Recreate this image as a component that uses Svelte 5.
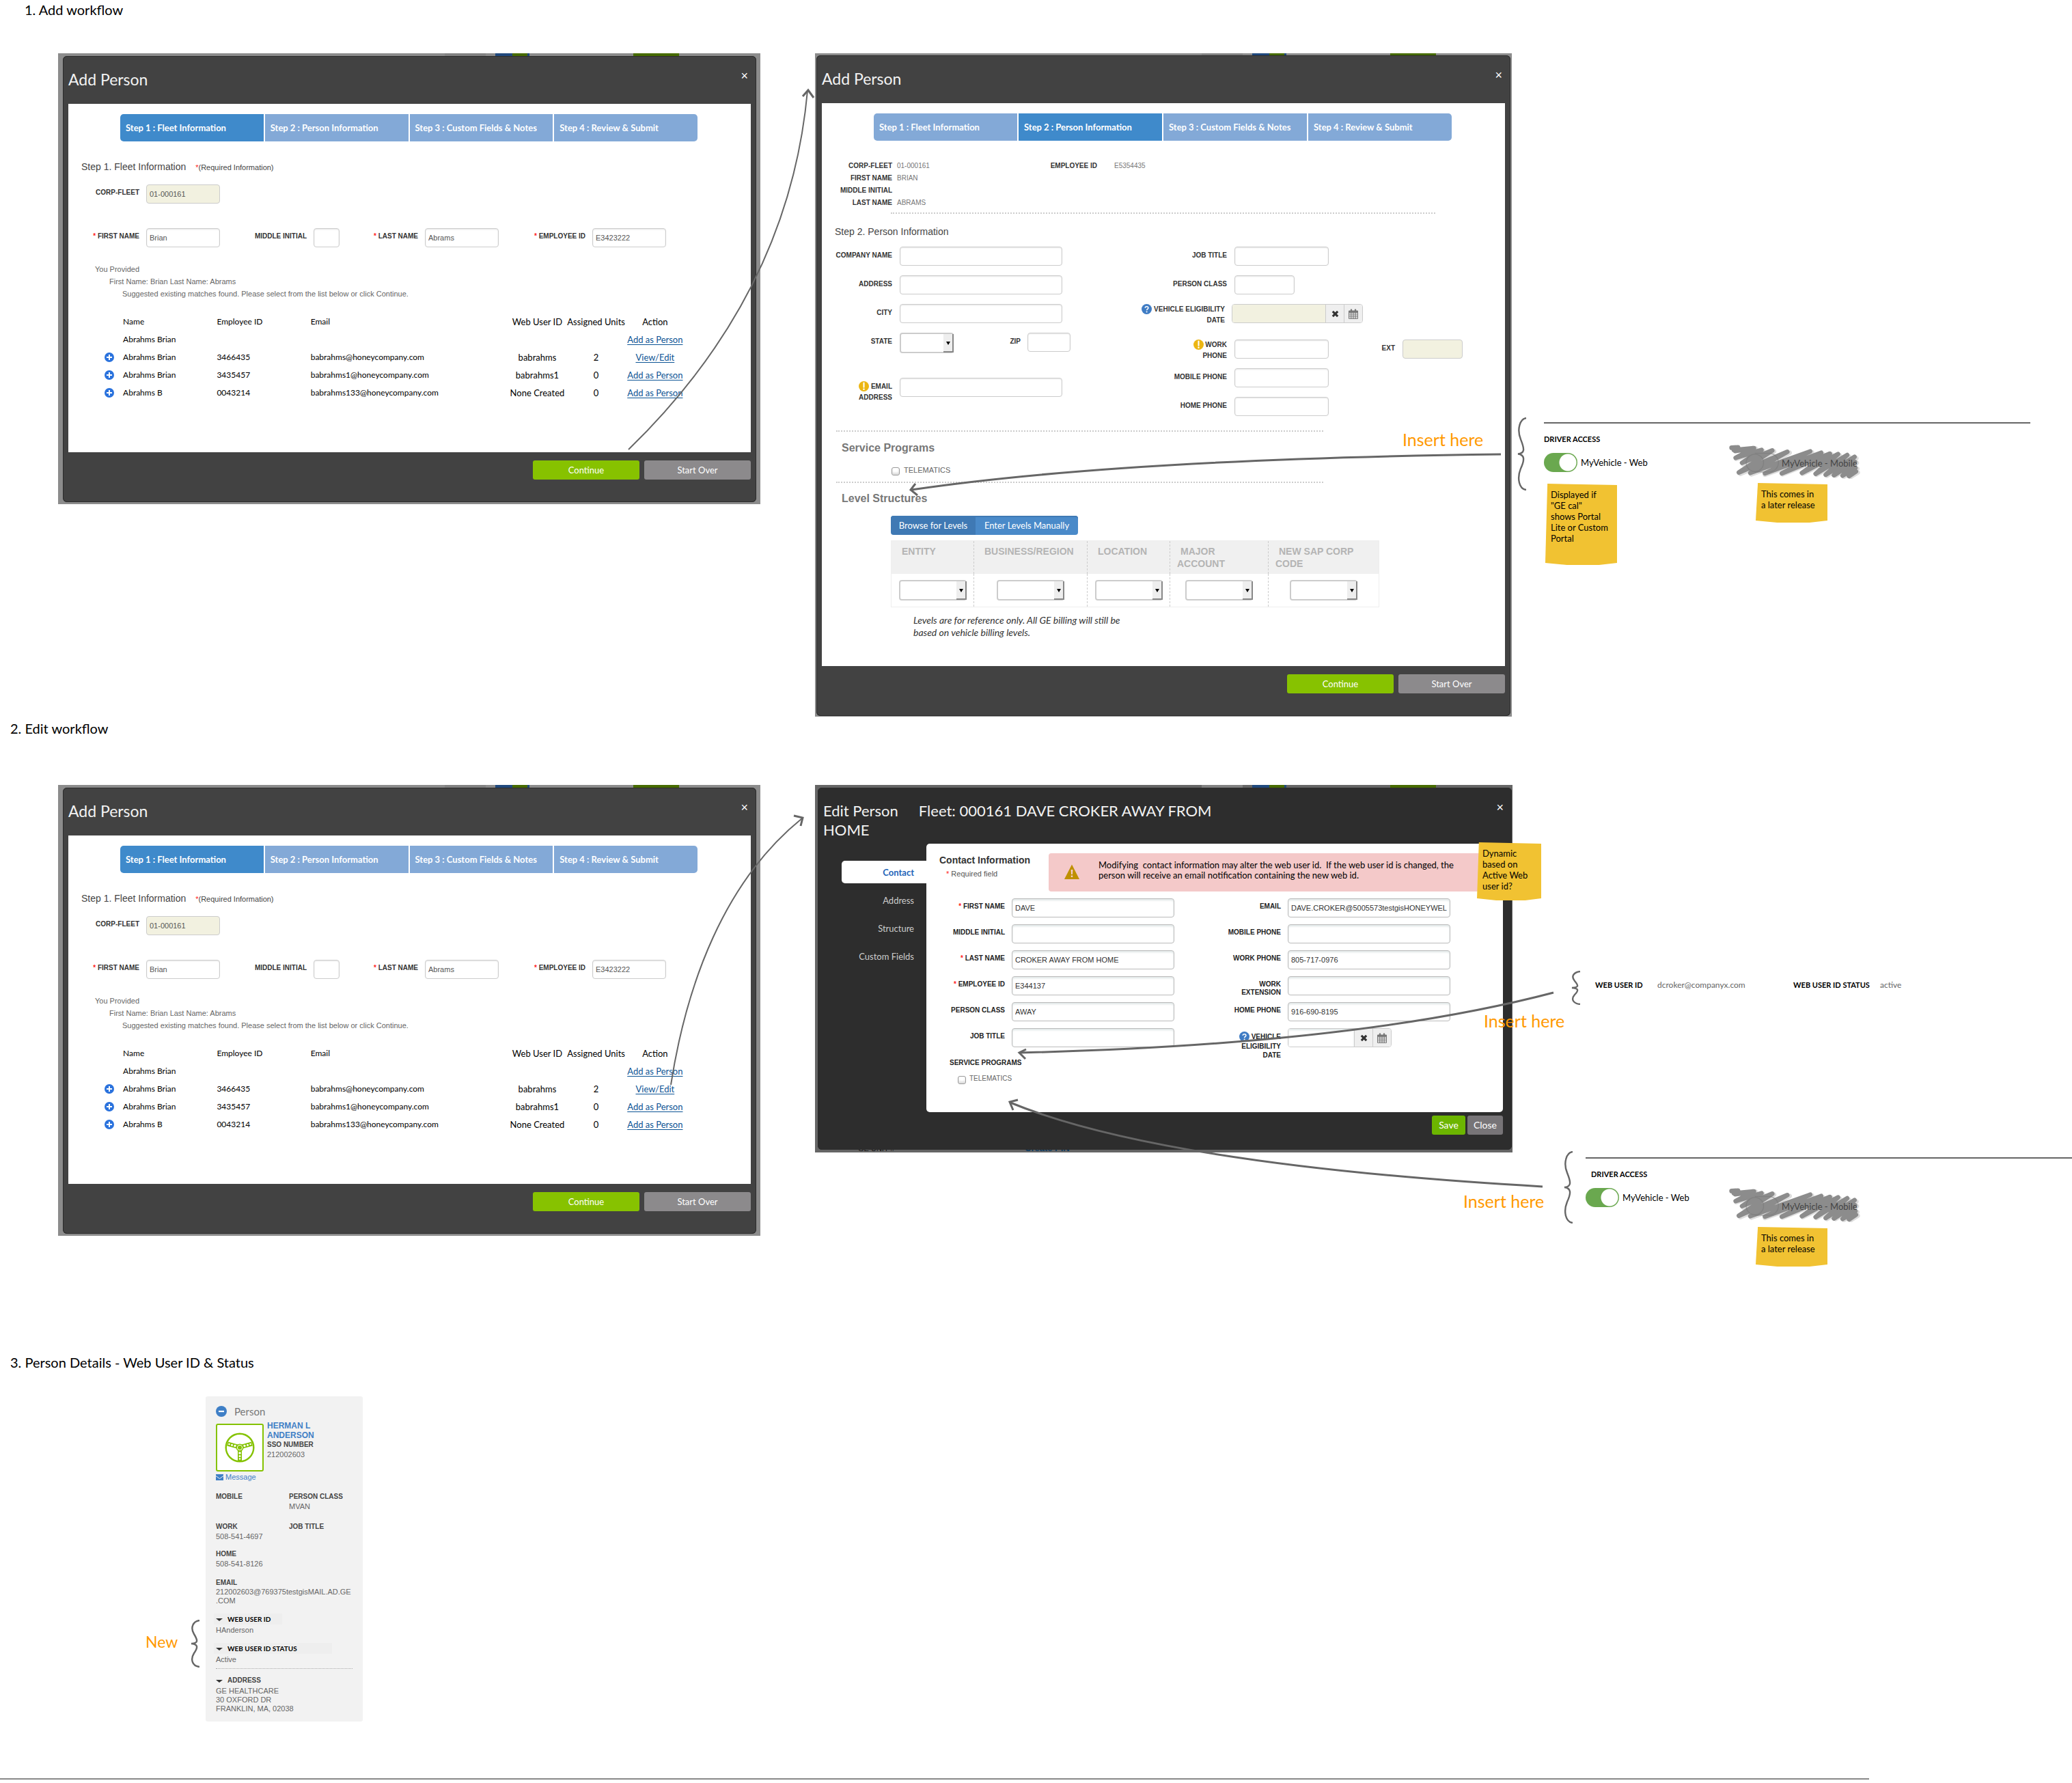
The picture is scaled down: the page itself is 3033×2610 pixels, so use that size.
<script>
  const steps = [
    'Step 1 : Fleet Information',
    'Step 2 : Person Information',
    'Step 3 : Custom Fields & Notes',
    'Step 4 : Review & Submit'
  ];

  const matches = [
    { name: 'Abrahms Brian', id: '', email: '', user: '', units: '', action: 'Add as Person' },
    { name: 'Abrahms Brian', id: '3466435', email: 'babrahms@honeycompany.com', user: 'babrahms', units: '2', action: 'View/Edit' },
    { name: 'Abrahms Brian', id: '3435457', email: 'babrahms1@honeycompany.com', user: 'babrahms1', units: '0', action: 'Add as Person' },
    { name: 'Abrahms B', id: '0043214', email: 'babrahms133@honeycompany.com', user: 'None Created', units: '0', action: 'Add as Person' }
  ];

  const levels = ['ENTITY', 'BUSINESS/REGION', 'LOCATION', 'MAJOR ACCOUNT', 'NEW SAP CORP CODE'];
</script>

{#snippet stepBar(active)}
  <ol class="steps">
    {#each steps as step, i}
      <li class:active={i === active}>{step}</li>
    {/each}
  </ol>
{/snippet}

{#snippet helpIcon()}
  <svg class="badge" viewBox="0 0 16 16" aria-hidden="true">
    <circle cx="8" cy="8" r="8" fill="#3f7cc4" />
    <path d="M5.6 6.2c0-3 4.9-3 4.9 0 0 1.7-2.4 1.8-2.4 3.6" fill="none" stroke="#fff" stroke-width="1.7" />
    <circle cx="8.1" cy="12.2" r="1.1" fill="#fff" />
  </svg>
{/snippet}

{#snippet warnIcon()}
  <svg class="badge" viewBox="0 0 16 16" aria-hidden="true">
    <circle cx="8" cy="8" r="8" fill="#ecb613" />
    <path d="M8 2.6v6.8" stroke="#fff" stroke-width="2.2" stroke-linecap="round" />
    <circle cx="8" cy="12.6" r="1.3" fill="#fff" />
  </svg>
{/snippet}

{#snippet dateButtons()}
  <button type="button" aria-label="Clear date">
    <svg viewBox="0 0 12 12" width="11" height="11"><path d="M2 2l8 8M10 2l-8 8" stroke="#333" stroke-width="3.4" /></svg>
  </button>
  <button type="button" aria-label="Pick date">
    <svg viewBox="0 0 14 15" width="14" height="15" fill="none" stroke="#777">
      <path d="M.5 3h13v11.5H.5zM.5 6h13M.5 9h13M.5 11.8h13M3.8 5v9.5M7 5v9.5M10.2 5v9.5" />
      <path d="M.5 4.2h13" stroke-width="2.4" />
      <path d="M4 .5v3M10 .5v3" stroke-width="2.2" />
    </svg>
  </button>
{/snippet}

{#snippet brace(cls, h)}
  <svg class="brace {cls}" viewBox="0 0 14 {h}" preserveAspectRatio="none" aria-hidden="true">
    <path d="M13 1C4 2 -1 {h * 0.16} 5 {h * 0.3}C11 {h * 0.44} 11 {h * 0.49} 1 {h * 0.5}C11 {h * 0.51} 11 {h * 0.58} 5 {h * 0.7}C-1 {h * 0.84} 3 {h - 2} 13 {h - 1}" />
  </svg>
{/snippet}

{#snippet fleetDialog(key)}
  <div class="dialog">
    <header class="bar">
      <h2>Add Person</h2>
      <button type="button" class="close" aria-label="Close">×</button>
    </header>
    <div class="sheet">
      {@render stepBar(0)}
      <p class="steptitle">Step 1. Fleet Information <small><i>*</i>(Required Information)</small></p>
      <div class="idgrid">
        <label for="corp-{key}">CORP-FLEET</label>
        <input id="corp-{key}" class="locked" value="01-000161" readonly />
      </div>
      <div class="idgrid names">
        <label for="first-{key}"><i>*</i> FIRST NAME</label>
        <input id="first-{key}" value="Brian" />
        <label for="mi-{key}">MIDDLE INITIAL</label>
        <input id="mi-{key}" value="" />
        <label for="last-{key}"><i>*</i> LAST NAME</label>
        <input id="last-{key}" value="Abrams" />
        <label for="emp-{key}"><i>*</i> EMPLOYEE ID</label>
        <input id="emp-{key}" value="E3423222" />
      </div>
      <div class="provided">
        <p>You Provided</p>
        <p class="in1">First Name: Brian Last Name: Abrams</p>
        <p class="in2">Suggested existing matches found. Please select from the list below or click Continue.</p>
      </div>
      <table class="matches">
        <thead>
          <tr>
            <th class="c-icon"></th>
            <th class="c-name">Name</th>
            <th class="c-name">Employee ID</th>
            <th class="c-mail">Email</th>
            <th class="c-mid">Web User ID</th>
            <th class="c-mid">Assigned Units</th>
            <th class="c-mid">Action</th>
          </tr>
        </thead>
        <tbody>
          {#each matches as m}
            <tr>
              <td>
                {#if m.id}
                  <button type="button" class="plus" aria-label="Expand {m.name}">
                    <svg viewBox="0 0 14 14" width="14" height="14"><circle cx="7" cy="7" r="7" fill="#2a72dd" /><path d="M7 3v8M3 7h8" stroke="#fff" stroke-width="2" /></svg>
                  </button>
                {/if}
              </td>
              <td>{m.name}</td>
              <td>{m.id}</td>
              <td>{m.email}</td>
              <td class="mid">{m.user}</td>
              <td class="mid">{m.units}</td>
              <td class="mid"><a href="#person">{m.action}</a></td>
            </tr>
          {/each}
        </tbody>
      </table>
    </div>
    <footer class="actions">
      <button type="button" class="go">Continue</button>
      <button type="button" class="reset">Start Over</button>
    </footer>
  </div>
{/snippet}

{#snippet driverAccess(key)}
  <h3>DRIVER ACCESS</h3>
  <label class="toggle" for="web-{key}">
    <input id="web-{key}" type="checkbox" role="switch" checked />
    <span>MyVehicle - Web</span>
  </label>
{/snippet}

{#snippet scribbled()}
  <span class="mobile">MyVehicle - Mobile</span>
  <svg class="scribble" viewBox="960 150 580 152" aria-hidden="true">
    <g fill="none" stroke-linejoin="round" stroke-linecap="round" stroke-width="20">
      <path class="shade" d="M1080 170L994 214L1112 180L1025 238L1160 182L1012 280L1228 188L1060 282L1326 186L1120 284L1374 194L1198 282L1412 196L1286 280L1448 200L1346 284L1488 204L1392 288L1520 212L1430 288L1522 232L1466 292L1524 258L1494 294L1526 274" />
      <path class="ink" d="M974 166L1002 164L984 176L1070 168L990 180L1072 168L992 210L1105 176L1020 232L1152 178L1006 274L1218 184L1056 276L1318 182L1120 278L1366 188L1194 278L1404 192L1282 276L1440 194L1342 280L1480 198L1386 284L1512 206L1422 286L1514 228L1460 288L1516 254L1488 290L1518 270" />
    </g>
    <g fill="none" stroke="#777" stroke-width="4" opacity=".5"><circle cx="1076" cy="232" r="38" /><path d="M1076 190h62a40 40 0 010 82h-62" /></g>
  </svg>
{/snippet}

<main class="board">
  <h1 class="title t1">1. Add workflow</h1>
  <h1 class="title t2">2. Edit workflow</h1>
  <h1 class="title t3">3. Person Details - Web User ID &amp; Status</h1>

  <section class="frame f1">{@render fleetDialog('a')}</section>
  <section class="frame f3">{@render fleetDialog('b')}</section>

  <section class="frame f2">
    <div class="dialog">
      <header class="bar">
        <h2>Add Person</h2>
        <button type="button" class="close" aria-label="Close">×</button>
      </header>
      <div class="sheet">
        {@render stepBar(1)}
        <dl class="summary">
          <dt>CORP-FLEET</dt><dd>01-000161</dd><dt>EMPLOYEE ID</dt><dd class="far">E5354435</dd>
          <dt>FIRST NAME</dt><dd class="wide">BRIAN</dd>
          <dt>MIDDLE INITIAL</dt><dd class="wide"></dd>
          <dt>LAST NAME</dt><dd class="wide">ABRAMS</dd>
        </dl>
        <hr class="dots upper" />
        <p class="steptitle second">Step 2. Person Information</p>
        <div class="person">
          <div class="col">
            <label class="field"><span>COMPANY NAME</span><input class="w-long" /></label>
            <label class="field"><span>ADDRESS</span><input class="w-long" /></label>
            <label class="field"><span>CITY</span><input class="w-long" /></label>
            <div class="pair">
              <label class="field"><span>STATE</span><span class="pick short"><select><option></option></select></span></label>
              <label class="field zip"><span>ZIP</span><input /></label>
            </div>
            <label class="field two mail"><span>{@render warnIcon()} EMAIL<br />ADDRESS</span><input class="w-long" /></label>
          </div>
          <div class="col right">
            <label class="field"><span>JOB TITLE</span><input class="w-mid" /></label>
            <label class="field"><span>PERSON CLASS</span><input class="w-ext" /></label>
            <div class="field two date">
              <label for="elig-a">{@render helpIcon()} VEHICLE ELIGIBILITY<br />DATE</label>
              <div class="group"><input id="elig-a" class="locked" readonly />{@render dateButtons()}</div>
            </div>
            <div class="pair phone">
              <label class="field two"><span>{@render warnIcon()} WORK<br />PHONE</span><input class="w-mid" /></label>
              <label class="field ext"><span>EXT</span><input class="w-ext locked" readonly /></label>
            </div>
            <label class="field"><span>MOBILE PHONE</span><input class="w-mid" /></label>
            <label class="field"><span>HOME PHONE</span><input class="w-mid" /></label>
          </div>
        </div>
        <hr class="dots mid1" />
        <h3 class="group-title">Service Programs</h3>
        <label class="check"><input type="checkbox" /> TELEMATICS</label>
        <hr class="dots mid2" />
        <h3 class="group-title">Level Structures</h3>
        <div class="tabs">
          <button type="button" class="on">Browse for Levels</button><button type="button">Enter Levels Manually</button>
        </div>
        <table class="levels">
          <thead>
            <tr>{#each levels as level}<th>{level}</th>{/each}</tr>
          </thead>
          <tbody>
            <tr>
              {#each levels as level}
                <td><span class="pick"><select aria-label={level}><option></option></select></span></td>
              {/each}
            </tr>
          </tbody>
        </table>
        <p class="hint">Levels are for reference only. All GE billing will still be<br />based on vehicle billing levels.</p>
      </div>
      <footer class="actions">
        <button type="button" class="go">Continue</button>
        <button type="button" class="reset">Start Over</button>
      </footer>
    </div>
  </section>

  <section class="frame f4">
    <div class="dialog dark">
      <header class="bar">
        <h2><span class="lead">Edit Person</span>Fleet: 000161 DAVE CROKER AWAY FROM<br />HOME</h2>
        <button type="button" class="close" aria-label="Close">×</button>
      </header>
      <div class="split">
        <nav>
          <a class="on" href="#contact">Contact</a>
          <a href="#address">Address</a>
          <a href="#structure">Structure</a>
          <a href="#custom">Custom Fields</a>
        </nav>
        <div class="panel">
          <div class="top">
            <div class="heading">
              <h3>Contact Information</h3>
              <p><i>*</i> Required field</p>
            </div>
            <div class="alert" role="alert">
              <svg viewBox="0 0 22 22" width="22" height="22" aria-hidden="true">
                <path d="M11 .5L22 22H0z" fill="#bf9000" /><path d="M9.6 8h2.8l-.5 7h-1.8zM9.8 16.6h2.4v2.4H9.8z" fill="#f4cccc" />
              </svg>
              <p>Modifying&nbsp; contact information may alter the web user id.&nbsp; If the web user id is changed, the<br />person will receive an email notification containing the new web id.</p>
            </div>
          </div>
          <div class="contact">
            <label for="e1"><i>*</i> FIRST NAME</label><input id="e1" value="DAVE" />
            <label for="e2">EMAIL</label><input id="e2" value="DAVE.CROKER@5005573testgisHONEYWELL" />
            <label for="e3">MIDDLE INITIAL</label><input id="e3" value="" />
            <label for="e4">MOBILE PHONE</label><input id="e4" value="" />
            <label for="e5"><i>*</i> LAST NAME</label><input id="e5" value="CROKER AWAY FROM HOME" />
            <label for="e6">WORK PHONE</label><input id="e6" value="805-717-0976" />
            <label for="e7"><i>*</i> EMPLOYEE ID</label><input id="e7" value="E344137" />
            <label for="e8">WORK<br />EXTENSION</label><input id="e8" value="" />
            <label for="e9">PERSON CLASS</label><input id="e9" value="AWAY" />
            <label for="e10">HOME PHONE</label><input id="e10" value="916-690-8195" />
            <label for="e11">JOB TITLE</label><input id="e11" value="" />
            <label for="e12" class="tall">{@render helpIcon()} VEHICLE<br />ELIGIBILITY<br />DATE</label>
            <div class="group narrow"><input id="e12" value="" />{@render dateButtons()}</div>
          </div>
          <h4>SERVICE PROGRAMS</h4>
          <label class="check inner"><input type="checkbox" /> TELEMATICS</label>
        </div>
      </div>
      <footer class="actions small">
        <button type="button" class="save">Save</button>
        <button type="button" class="shut">Close</button>
      </footer>
    </div>
    <div class="behind"><b>GE UNIT #</b><b class="pin">Create PIN</b></div>
  </section>

  <section class="access a1">
    {@render driverAccess('a')}
    <p class="note n1">Displayed if<br />"GE cal"<br />shows Portal<br />Lite or Custom<br />Portal</p>
  </section>
  <div class="later l1">{@render scribbled()}</div>
  <p class="note n2">This comes in<br />a later release</p>

  <section class="access a2">{@render driverAccess('b')}</section>
  <div class="later l2">{@render scribbled()}</div>
  <p class="note n3">This comes in<br />a later release</p>
  <p class="note n4">Dynamic<br />based on<br />Active Web<br />user id?</p>

  <dl class="webid">
    <dt>WEB USER ID</dt><dd class="w1">dcroker@companyx.com</dd>
    <dt>WEB USER ID STATUS</dt><dd>active</dd>
  </dl>

  <article class="card">
    <header>
      <svg viewBox="0 0 16 16" width="16" height="16" aria-hidden="true"><circle cx="8" cy="8" r="8" fill="#3f7fc6" /><path d="M4 8h8" stroke="#fff" stroke-width="2.2" /></svg>
      <h2>Person</h2>
    </header>
    <div class="who">
      <svg class="avatar" viewBox="0 0 70 70" aria-hidden="true">
        <rect x="1" y="1" width="68" height="68" rx="2" fill="#fff" stroke="#84c200" stroke-width="2" />
        <g fill="none" stroke="#84c200">
          <circle cx="35" cy="35" r="20.300" stroke-width="2.400" />
          <path d="M17 29.500Q26 32 35 34.500Q44 32 53 29.500M35 38v17" stroke-width="6" />
        </g>
        <g fill="#fff">
          <circle cx="19.500" cy="30" r="1.3" /><circle cx="23.500" cy="31.200" r="1.500" /><circle cx="28" cy="32.400" r="1.700" />
          <circle cx="50.500" cy="30" r="1.3" /><circle cx="46.500" cy="31.200" r="1.500" /><circle cx="42" cy="32.400" r="1.700" />
          <circle cx="35" cy="43" r="1.8" /><circle cx="35" cy="47.500" r="1.500" /><circle cx="35" cy="51.500" r="1.300" />
        </g>
        <circle cx="35" cy="35" r="5.500" fill="#84c200" /><circle cx="35" cy="35" r="3.600" fill="none" stroke="#fff" />
      </svg>
      <div>
        <h3>HERMAN L<br />ANDERSON</h3>
        <b>SSO NUMBER</b>
        <p>212002603</p>
      </div>
    </div>
    <a class="msg" href="#message"><svg viewBox="0 0 11 9" width="11" height="9" aria-hidden="true"><path d="M0 0h11v9H0z" fill="#3f7fc6" /><path d="M0 2.500l5.500 4 5.500-4" fill="none" stroke="#f2f2f2" /></svg> Message</a>
    <div class="facts">
      <div class="cell c44"><b>MOBILE</b></div>
      <div class="cell c44"><b>PERSON CLASS</b><p>MVAN</p></div>
      <div class="cell c40"><b>WORK</b><p>508-541-4697</p></div>
      <div class="cell c40"><b>JOB TITLE</b></div>
      <div class="cell c42"><b>HOME</b><p>508-541-8126</p></div>
      <div class="cell full"><b>EMAIL</b><p class="tight">212002603@769375testgisMAIL.AD.GE<br />.COM</p></div>
    </div>
    <p class="fold"><i></i>WEB USER ID</p>
    <p class="val">HAnderson</p>
    <p class="fold long"><i></i>WEB USER ID STATUS</p>
    <p class="val last">Active</p>
    <div class="addr">
      <p class="fold plain"><i></i>ADDRESS</p>
      <p>GE HEALTHCARE<br />30 OXFORD DR<br />FRANKLIN, MA, 02038</p>
    </div>
  </article>
  <p class="call new">New</p>
  <hr class="baseline" />

  {@render brace('b1', 107)}
  {@render brace('b2', 50)}
  {@render brace('b3', 106)}
  {@render brace('b4', 70)}

  <svg class="arrows" viewBox="0 0 3033 2610" width="3033" height="2610" aria-hidden="true">
    <path d="M920 658Q1155 430 1182 133" />
    <path d="M1175 141L1183 132L1191 143" class="tip" />
    <path d="M982 1588C1005 1440 1060 1290 1174 1198" />
    <path d="M1162 1194L1175 1197L1172 1209" class="tip" />
    <path d="M2197 665Q1640 672 1334 717" class="bold" />
    <path d="M1340 708L1333 717L1343 725" class="tip" />
    <path d="M2274 1453Q1985 1529 1492 1541" class="bold" />
    <path d="M1502 1536L1492 1541L1501 1550" class="tip" />
    <path d="M2258 1737Q1700 1705 1479 1614" class="bold" />
    <path d="M1490 1610L1478 1613L1483 1625" class="tip" />
  </svg>

  <p class="call i1">Insert here</p>
  <p class="call i2">Insert here</p>
  <p class="call i3">Insert here</p>
</main>

<style>
  :global(body) { margin: 0; background: #fff; }
  .board { position: relative; min-height: 2610px; overflow: hidden; font-family: 'Liberation Sans', Arial, sans-serif; font-size: 11px; color: #444; }
  .board :is(h1, h2, h3, h4, p, dl, dd, ol, hr) { margin: 0; padding: 0; }
  input, button, select { box-sizing: border-box; font: inherit; margin: 0; }
  button { border: 0; cursor: pointer; padding: 0; }
  i { font-style: normal; color: #f22; }

  .title { position: absolute; font: 400 20px/24px Lato, sans-serif; color: #000; white-space: nowrap; }
  .t1 { left: 36px; top: 2px; }
  .t2 { left: 15px; top: 1054px; }
  .t3 { left: 15px; top: 1982px; }

  .frame { position: absolute; box-sizing: border-box; background: linear-gradient(90deg, transparent 566px, #828282 566px, #828282 626px, transparent 626px, transparent 640px, #20497d 640px, #20497d 665px, #476b00 665px, #476b00 687px, #20497d 687px, #20497d 690px, transparent 690px, transparent 842px, #476b00 842px, #476b00 909px, transparent 909px) 0 0 / 100% 6px no-repeat #8c8c8c; }
  .f1, .f3 { left: 85px; width: 1028px; padding: 4px 6px 3px 7px; }
  .f1 { top: 78px; }
  .f3 { top: 1149px; }
  .f2 { left: 1193px; top: 78px; width: 1020px; padding: 3px 2px 1px; }
  .f4 { left: 1193px; top: 1149px; width: 1021px; padding: 4px 1px 0 4px; background-color: #666; }
  .dialog { position: relative; z-index: 1; background: #424242; border-radius: 6px; box-shadow: inset 0 0 0 1px #2c2c2c; padding: 0 8px 33px; }
  .dark { background: #2d2d2d; padding: 0 0 22px; }
  .bar { display: flex; justify-content: space-between; height: 70px; align-items: flex-start; }
  .bar h2 { font: 400 23px/28px Lato, sans-serif; color: #f2f2f2; }
  .board .bar h2 { padding-top: 20px; }
  .close { background: none; color: #fff; font-size: 18px; line-height: 18px; padding: 20px 4px 0; }
  .sheet { background: #fff; }
  .f1 .sheet, .f3 .sheet { padding: 15px 0 74px; }
  .f2 .sheet { padding: 15px 0 40px; }

  .board .steps { display: flex; gap: 2px; list-style: none; margin: 0 78px 0 76px; border-radius: 5px; overflow: hidden; }
  .steps li { flex: 1; background: #83a9d7; color: #fff; font: 700 13px/40px Lato, sans-serif; padding-left: 8px; white-space: nowrap; }
  .steps li.active { background: #3f8acb; }

  .board .steptitle { margin: 27px 0 15px 19px; font-size: 14px; line-height: 20px; color: #444; }
  .board .second { margin: 16px 0 12px; padding-left: 19px; }
  .steptitle small { font-size: 11px; margin-left: 10px; }

  input { height: 28px; border: 1px solid #ccc; border-radius: 4px; background: #fff; box-shadow: inset 0 1px 2px #e4e4e4; padding: 0 4px; color: #555; min-width: 0; width: 100%; outline: 0; }
  .locked { background: #f2f1e0; box-shadow: none; }
  .idgrid { display: grid; grid-template-columns: 104px 108px 117px 38px 105px 108px 117px 108px; column-gap: 10px; align-items: center; }
  .names { margin-top: 36px; }
  .idgrid label, .contact label { font-size: 10px; font-weight: 700; line-height: 12px; text-align: right; color: #333; }
  .idgrid label { padding-bottom: 4px; }

  .provided { margin: 23px 0 19px 39px; line-height: 18px; font-size: 11px; color: #666; }
  .board .in1 { padding-left: 21px; }
  .board .in2 { padding-left: 40px; }

  .matches { border-collapse: collapse; table-layout: fixed; width: 851px; margin-left: 51px; font: 400 12px/16px Lato, sans-serif; color: #000; }
  .matches th, .matches td { height: 26px; padding: 0; text-align: left; font-weight: 400; white-space: nowrap; }
  .c-icon { width: 29px; }
  .c-name { width: 137px; }
  .c-mail { width: 288px; }
  .matches .c-mid, .matches .mid { width: 86px; text-align: center; font-size: 13px; }
  .matches a { color: #0b5394; text-underline-offset: 2px; }
  .plus { background: none; display: flex; margin-left: 2px; }

  .actions { display: flex; justify-content: flex-end; gap: 7px; padding-top: 12px; }
  .actions button { width: 156px; height: 28px; border-radius: 3px; color: #fff; font: 400 13px/20px Lato, sans-serif; }
  .go { background: #87c200; }
  .reset { background: #8c8a8c; }
  .small { gap: 3px; padding: 5px 13px 0 0; }
  .actions .save { width: 49px; background: #6cb500; font-size: 14px; }
  .actions .shut { width: 52px; background: #777477; font-size: 14px; }

  .summary { display: grid; grid-template-columns: 103px 176px 110px 1fr; column-gap: 7px; line-height: 18px; }
  .board .summary { padding-top: 28px; }
  .summary dt { font-size: 10px; font-weight: 700; text-align: right; color: #333; }
  .summary dd { font-size: 10px; color: #777; }
  .board .summary .far { padding-left: 18px; }
  .summary .wide { grid-column: 2 / -1; }
  .dots { border: 0; border-top: 2px dotted #ccc; }
  .board .upper { margin: 5px 102px 0 101px; }
  .person { display: flex; justify-content: space-between; }
  .col { display: flex; flex-direction: column; gap: 14px; }
  .field { display: grid; grid-template-columns: 103px auto; column-gap: 11px; justify-content: start; }
  .field > span:first-child, .field > label { font-size: 10px; font-weight: 700; line-height: 12px; color: #333; text-align: right; padding-top: 7px; }
  .field.two > span:first-child, .field.two > label { line-height: 16px; padding-top: 0; white-space: nowrap; }
  .right { width: 600px; }
  .right .field { grid-template-columns: 193px auto; }
  .right .field.date { grid-template-columns: 190px auto; column-gap: 10px; height: 28px; }
  .pair { display: flex; align-items: flex-start; height: 28px; }
  .board .field.zip { grid-template-columns: 98px 63px; column-gap: 10px; }
  .board .field.ext { grid-template-columns: 97px auto; }
  .board .ext > span:first-child { padding-top: 7px; }
  .mail { margin-top: 24px; }
  .board .field.mail > span:first-child { padding-top: 5px; }
  .phone { margin-top: 10px; }
  .w-long { width: 238px; }
  .w-mid { width: 138px; }
  .w-ext { width: 88px; }
  .badge { width: 15px; height: 15px; vertical-align: -4px; }
  .group { display: flex; width: 192px; height: 28px; box-sizing: border-box; border: 1px solid #ccc; border-radius: 4px; overflow: hidden; }
  .group input { height: 26px; border: 0; border-radius: 0; flex: 1; }
  .group button { width: 27px; border-left: 1px solid #ccc; background: #efefef; display: grid; place-items: center; }
  .narrow { width: 152px; }

  .pick { position: relative; display: inline-block; width: 99px; height: 30px; vertical-align: top; }
  .pick.short { width: 79px; }
  .pick select { appearance: none; width: 100%; height: 30px; border: 2px solid #ccc; border-radius: 4px; background: #fff; }
  .pick::before { content: ''; position: absolute; top: 2px; right: 0; bottom: 1px; width: 13px; background: #eee; border-right: 2px solid #888; border-bottom: 2px solid #888; pointer-events: none; }
  .pick::after { content: ''; position: absolute; right: 5px; top: 13px; border: 3px solid transparent; border-top: 5px solid #000; border-bottom: 0; pointer-events: none; }

  .board .mid1 { margin: 21px 266px 14px 21px; }
  .board .mid2 { margin: 7px 266px 13px 21px; }
  .group-title { font-size: 16px; line-height: 20px; color: #777; }
  .board .group-title { padding-left: 29px; }
  .check { display: flex; align-items: center; gap: 6px; margin: 12px 0 0 102px; height: 20px; line-height: 14px; color: #666; }
  .check input { appearance: none; width: 12px; height: 12px; border: 1px solid #999; border-radius: 3px; padding: 0; margin-top: 4px; box-shadow: inset 0 -3px 3px #ddd; }
  .inner { font-size: 10px; margin: 7px 0 0 46px; gap: 5px; }
  .tabs { display: flex; margin: 15px 0 8px 101px; }
  .tabs button { height: 28px; width: 150px; background: #4a8ac9; color: #fff; font: 400 13px/20px Lato, sans-serif; border-radius: 0 4px 4px 0; box-shadow: inset 0 2px 0 #3f79b4; }
  .tabs .on { width: 124px; background: #3f79b4; border-radius: 4px 0 0 4px; }
  .levels { border-collapse: collapse; table-layout: fixed; width: 715px; margin-left: 101px; border: 1px solid #eee; }
  .levels th { box-sizing: border-box; height: 48px; background: #f0f0f0; color: #b4b4b4; font-size: 14px; line-height: 18px; text-align: left; vertical-align: top; padding: 6px 10px 0; text-indent: 5px; }
  .levels th, .levels td { border-left: 1px dashed #ccc; }
  .levels th:nth-child(1), .levels th:nth-child(3) { width: 121px; }
  .levels th:nth-child(2) { width: 166px; }
  .levels th:nth-child(4) { width: 144px; }
  .levels td { height: 48px; padding: 0; text-align: center; }
  .hint { font: italic 400 14px/18px Lato, sans-serif; color: #333; }
  .board .hint { margin: 10px 0 0 134px; }

  .dark .bar { height: 82px; padding: 0 8px 0 8px; }
  .dark .bar h2 { font-size: 22px; }
  .lead { margin-right: 30px; }
  .split { display: flex; padding-right: 13px; }
  nav { width: 124px; padding: 25px 0 0 35px; display: flex; flex-direction: column; gap: 8px; }
  nav a { font: 400 13px/34px Lato, sans-serif; height: 33px; color: #ccc; text-align: right; padding-right: 18px; text-decoration: none; border-radius: 5px 0 0 5px; }
  nav .on { background: #fff; color: #2264b8; font-weight: 700; }
  .panel { flex: 1; background: #fff; border-radius: 5px; padding: 14px 0 39px; }
  .top { display: flex; margin-bottom: 10px; }
  .heading { width: 160px; padding-left: 19px; }
  .heading h3 { font-size: 14px; line-height: 20px; color: #333; white-space: nowrap; }
  .heading p { line-height: 20px; color: #555; }
  .board .heading p { padding-left: 10px; }
  .alert { flex: 1; margin-right: 20px; height: 56px; background: #f4c9c9; border-radius: 4px; display: flex; gap: 28px; padding-left: 23px; box-sizing: border-box; }
  .alert svg { margin-top: 16px; }
  .alert p { font: 400 13px/15px Lato, sans-serif; color: #000; white-space: nowrap; }
  .board .alert p { margin-top: 10px; }
  .contact { display: grid; grid-template-columns: 115px 238px 146px 238px; gap: 10px; grid-auto-rows: 28px; }
  .contact label { padding-top: 6px; color: #222; }
  .contact input { color: #333; border-color: #bbb; box-shadow: inset 0 2px 3px #dfe6e6; }
  .contact .group input { border: 0; }
  .contact .tall { padding-top: 5px; line-height: 13px; white-space: nowrap; }
  h4 { font-size: 10px; line-height: 12px; color: #222; }
  .board h4 { margin: 17px 0 0 34px; }
  .behind { height: 12px; margin-top: -8px; display: flex; font-size: 11px; line-height: 12px; color: #111; padding-left: 59px; }
  .behind b { width: 244px; font-weight: 400; }
  .behind .pin { color: #0a3a60; font-size: 13px; font-weight: 700; }

  .access { position: absolute; box-sizing: border-box; border-top: 2px solid #666; font: 400 13px/16px Lato, sans-serif; color: #000; }
  .access h3, .webid dt { font: 700 11px/16px Lato, sans-serif; color: #000; }
  .a1 { left: 2260px; top: 618px; width: 712px; }
  .a2 { left: 2321px; top: 1694px; right: 0; }
  .board .access h3 { margin-top: 15px; }
  .board .a2 h3 { padding-left: 8px; }
  .toggle { display: flex; align-items: center; gap: 5px; margin-top: 12px; }
  .toggle input { appearance: none; width: 49px; height: 28px; border: 0; border-radius: 14px; box-shadow: none; background: radial-gradient(circle at 35px 14px, #fff 12px, #6aa84f 13px); }
  .note { position: absolute; z-index: 2; box-sizing: border-box; background: #f1c232; color: #000; font: 400 13px/16px Lato, sans-serif; white-space: nowrap; clip-path: polygon(3% 0, 100% 2px, 100% calc(100% - 3px), 75% 100%, 30% 100%, 0 calc(100% - 3px)); }
  .board .note { padding: 8px 0 0 8px; }
  .n1 { width: 105px; height: 119px; left: 2px; top: 88px; }
  .n2 { left: 2570px; top: 707px; width: 105px; height: 58px; }
  .n3 { left: 2570px; top: 1796px; width: 105px; height: 58px; }
  .n4 { left: 2162px; top: 1233px; width: 94px; height: 85px; }
  .later { position: absolute; left: 2530px; width: 194px; height: 52px; font: 400 13px/16px Lato, sans-serif; color: #444; }
  .l1 { top: 650px; }
  .l2 { top: 1738px; }
  .mobile { position: absolute; left: 78px; top: 20px; white-space: nowrap; z-index: 1; }
  .scribble { width: 194px; height: 51px; display: block; }
  .shade { stroke: #ddd; }
  .ink { stroke: #8c8c8c; }
  .webid { position: absolute; left: 2335px; top: 1433px; display: flex; font: 400 12px/18px Lato, sans-serif; color: #666; white-space: nowrap; }
  .webid dt { line-height: 18px; width: 91px; }
  .webid dt:nth-of-type(2) { width: 127px; }
  .webid .w1 { width: 199px; }

  .call { position: absolute; z-index: 4; font: 400 25px/28px Lato, sans-serif; color: #ff9900; white-space: nowrap; }
  .i1 { left: 2053px; top: 629px; }
  .i2 { left: 2172px; top: 1480px; }
  .i3 { left: 2142px; top: 1744px; }
  .new { left: 213px; top: 2389px; font-size: 23px; }

  .brace { position: absolute; width: 14px; fill: none; stroke: #666; stroke-width: 2.400; }
  .b1 { left: 2221px; top: 611px; height: 107px; }
  .b2 { left: 2300px; top: 1421px; height: 50px; }
  .b3 { left: 2289px; top: 1685px; height: 106px; }
  .b4 { left: 279px; top: 2371px; height: 70px; }
  .arrows { position: absolute; z-index: 3; left: 0; top: 0; pointer-events: none; fill: none; stroke: #666; stroke-width: 2; }
  .arrows .bold { stroke-width: 3; }
  .arrows .tip { stroke-width: 3; }
  .baseline { position: absolute; left: 0; top: 2603px; width: 2736px; border: 0; border-top: 2px solid #888; }

  .card { position: absolute; left: 301px; top: 2044px; width: 230px; box-sizing: border-box; background: #f2f2f2; border-radius: 3px; padding: 12px 15px; color: #666; line-height: 15px; }
  .card header { display: flex; align-items: center; gap: 11px; height: 20px; }
  .card header h2 { font: 400 15px/20px Lato, sans-serif; color: #777; }
  .card b { display: block; font-size: 10px; color: #444; }
  .who { display: flex; gap: 5px; margin-top: 4px; height: 74px; }
  .avatar { width: 70px; height: 70px; margin-top: 4px; }
  .who h3 { font-size: 12px; line-height: 14px; color: #3f7fc6; }
  .who b, .who p { line-height: 14px; }
  .msg { display: flex; align-items: center; gap: 3px; color: #3f7fc6; text-decoration: none; margin: 0 0 13px; line-height: 16px; }
  .facts { display: grid; grid-template-columns: 107px 1fr; }
  .c44 { height: 44px; }
  .c40 { height: 40px; }
  .c42, .full { height: 42px; grid-column: 1 / -1; }
  .board .facts .full { height: 52px; }
  .tight { line-height: 13px; }
  .fold { display: flex; align-items: center; width: 100px; height: 16px; background: #eee; font: 700 10px/16px Lato, sans-serif; color: #000; }
  .board .fold { margin: 1px 0 1px -3px; }
  .board .long { width: 173px; margin-top: 11px; }
  .fold i { border: 5px solid transparent; border-top: 4px solid #333; border-bottom: 0; margin: 1px 7px 0 3px; }
  .board .last { padding-bottom: 5px; border-bottom: 1px dotted #aaa; }
  .addr { padding-top: 8px; line-height: 13px; }
  .board .plain { background: none; font-family: 'Liberation Sans', sans-serif; color: #444; }
</style>
